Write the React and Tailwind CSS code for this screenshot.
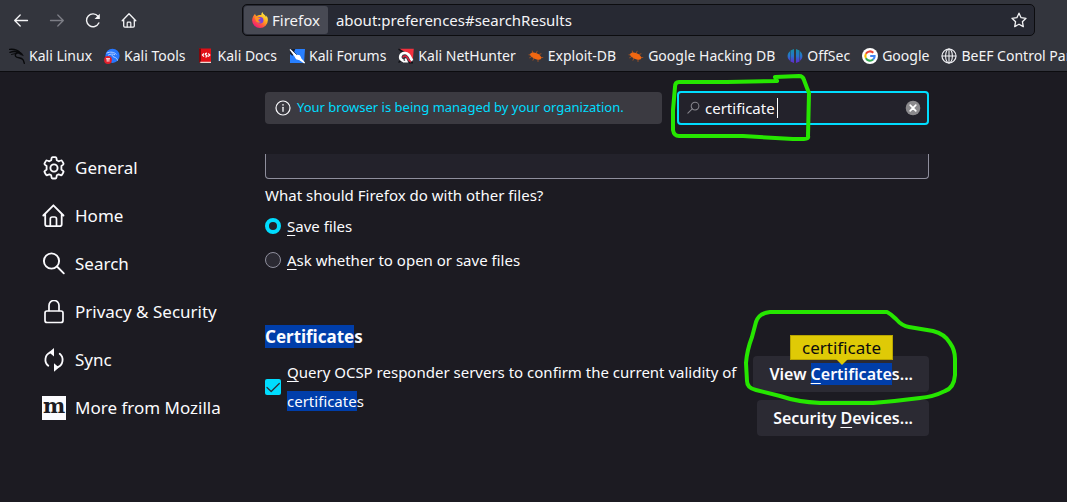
import React from "react";

function Glyph({ className = "size-4", box = 16, children }) {
  return (
    <svg
      className={`shrink-0 ${className}`}
      viewBox={`0 0 ${box} ${box}`}
      fill="none"
      stroke="currentColor"
      strokeLinecap="round"
      strokeLinejoin="round"
      aria-hidden="true"
    >
      {children}
    </svg>
  );
}

const BackIcon = () => (
  <Glyph><path d="M14.5 8.500H1.800M7.200 3 1.700 8.500l5.500 5.500" strokeWidth="1.3" /></Glyph>
);
const ForwardIcon = () => (
  <Glyph><path d="M1.500 8.500h12.700M8.800 3 14.300 8.500l-5.500 5.500" strokeWidth="1.3" /></Glyph>
);
const ReloadIcon = () => (
  <Glyph>
    <path d="M13.800 11a6.400 6.400 0 1 1-.8-6.700" strokeWidth="1.4" />
    <path d="M14.800 1.800v5.200H9.600z" fill="currentColor" stroke="none" />
  </Glyph>
);
const HomeSmallIcon = () => (
  <Glyph>
    <path d="M1.2 8.800 8 1.800l6.800 7M2.700 7.500v6.500c0 .7.4 1.100 1.100 1.100h8.400c.7 0 1.100-.4 1.100-1.100V7.500" strokeWidth="1.3" />
    <path d="M6.2 15v-4c0-.5.3-.8.8-.8h2c.5 0 .8.3.8.8v4" strokeWidth="1.2" />
  </Glyph>
);
const StarIcon = () => (
  <Glyph>
    <path d="m8 1.200 2.100 4.500 4.900.6-3.600 3.400.9 4.900L8 12.200l-4.300 2.400.9-4.900L1 6.300l4.900-.6z" strokeWidth="1.3" />
  </Glyph>
);

const FirefoxLogo = () => (
  <svg className="size-4 shrink-0" viewBox="0 0 16 16" aria-hidden="true">
    <defs>
      <linearGradient id="fx-body" x1="0.85" y1="0.1" x2="0.2" y2="0.95">
        <stop offset="0" stopColor="#fff04a" />
        <stop offset="0.35" stopColor="#ffae1c" />
        <stop offset="0.65" stopColor="#ff5a3c" />
        <stop offset="1" stopColor="#f0147e" />
      </linearGradient>
    </defs>
    <path d="M10.4.1c-1 1-1.200 2-1 2.800C7 2.800 5.300 3.300 4.600 4 3.700 3.700 3.100 2.700 3.100 1.800 1.700 3 .2 5.500.1 8.200A7.900 7.900 0 0 0 8 16a7.900 7.900 0 0 0 7.900-7.900c0-2-.8-3.700-1.800-4.500.2.700.2 1.200.1 1.700C13.200 2.700 10.700 2.400 10.400.1z" fill="url(#fx-body)" />
    <circle cx="8.100" cy="8.300" r="3.300" fill="#7a42d8" />
    <path d="M2.800 5.100c1.500-.6 3-.2 3.600.6 1 .1 2.100.1 2.100.5 0 .6-1.800 1-2 1.900-.2 1 1 2.100 2.500 1.500-1.100 1.800-4.300 1.500-5.100-.8-.4-1.400-1.100-2.400-1.100-3.700z" fill="#ff9222" />
  </svg>
);

const KaliLinuxIcon = () => (
  <Glyph className="size-4 text-[#08090b]">
    <path d="M.6 1.400c4-.4 8 .6 10.400 3.200M1 4.400c3-1.200 6-1 8 .2M10.400 4.800C7 4.700 5.600 6.600 6.700 8.300c1.300 1.900 5.500 1 7.200 3.300.9 1.200 1 2.400 1.400 3.700" strokeWidth="1.400" />
    <path d="m9.500 3.600 3 1.400 1.800 2.600-2.800-1L10 5.600z" fill="currentColor" strokeWidth=".6" />
    <path d="m2.500 6.500 4-1" strokeWidth=".9" />
  </Glyph>
);
const KaliToolsIcon = () => (
  <svg className="size-4 shrink-0" viewBox="0 0 16 16" aria-hidden="true">
    <circle cx="8.500" cy="7.800" r="7.100" fill="#2777ff" />
    <path d="M2.500 5.200c4-2 8-1 10 1.400M4 7.200c2.500-1.500 5-1.400 7-.4M8 7c.5 3 5 1.500 5.500 5.500" fill="none" stroke="#b8d0ff" strokeWidth="1" />
    <circle cx="4" cy="12" r="3.900" fill="#e21f2b" />
    <path d="M2 10.700h4M3.200 10.700v3M4.900 10.700v3" fill="none" stroke="#fff" strokeWidth=".9" />
  </svg>
);
const KaliDocsIcon = () => (
  <svg className="size-4 shrink-0" viewBox="0 0 16 16" aria-hidden="true">
    <path d="M1 .500h12V15H2.500L1 14z" fill="#e10f16" />
    <path d="M1 .500h2V14H1z" fill="#7d090d" />
    <path d="M2 13.700h11V15H2.500z" fill="#f1d9d3" />
    <path d="M6 5.500 4.400 7 6 8.600M10.200 5.500 11.800 7l-1.600 1.700M9 5.200c-2.600.2-1.700 1.800-.8 1.900 1.500.3 1.100 1.800-.7 2" fill="none" stroke="#fff" strokeWidth="1.200" />
  </svg>
);
const KaliForumsIcon = () => (
  <svg className="size-4 shrink-0" viewBox="0 0 16 16" aria-hidden="true">
    <path d="M1 1h15l-1 14H1z" fill="#277fff" />
    <path d="M.8 1h5.500L3.500 8 1 6z" fill="#172033" />
    <path d="M1 1.500 7 7l3.500.8 1.500 3 3.600 4.200-4.800-3.300-3.300-1-1.500-2.600z" fill="#fff" stroke="#fff" strokeWidth="1.200" />
    <path d="m3.500 2.500 4.200 4.200" stroke="#172033" strokeWidth=".7" />
  </svg>
);
const NetHunterIcon = () => (
  <svg className="size-4 shrink-0" viewBox="0 0 16 16" aria-hidden="true">
    <path d="M1.500.800H15.800L14.800 12 9 5z" fill="#f4303d" />
    <path d="M.5 1 4.500 3.800M.5 14.500l2.500-2M11 14.800h4" stroke="#101116" strokeWidth="1.500" />
    <path d="M5.500 13C.2 11 1.800 5.200 6.800 5c4-.2 5 3.700 7.400 7.800" fill="none" stroke="#fff" strokeWidth="2.700" />
    <path d="M5 13.600h3.800L7.300 10.500" fill="none" stroke="#fff" strokeWidth="1.800" />
    <path d="M4.800 9.500C5.500 7.500 8 7.500 9 9c1 1.700 2 4 4 5" fill="none" stroke="#e3203c" strokeWidth="1.500" />
  </svg>
);
const BugIcon = () => (
  <Glyph className="size-4 text-[#f26711]">
    <path d="M2.300 5.700C4 3.600 8.800 4.500 11.800 7.200c1.500 1.400 2.100 3.300.9 4.100-2.200 1.200-7.600-.6-9.800-3.100-.8-.9-1.100-1.700-.6-2.500z" fill="currentColor" stroke="none" />
    <path d="M5 5.500 4.300 3M8 5.200l1.200-2M10.500 6.700l2.500-.9M4 8.500l-2.300 1.200M6 9.700l-1 2.500M10 11v2.500M12.500 9.500h2.300M1 6.800h1.500" strokeWidth=".7" strokeOpacity=".8" />
  </Glyph>
);
const OffSecIcon = () => (
  <svg className="size-4 shrink-0" viewBox="0 0 16 16" aria-hidden="true">
    <defs>
      <linearGradient id="offsec" x1="0" y1="0" x2="0" y2="1">
        <stop offset="0" stopColor="#168fa3" />
        <stop offset="0.5" stopColor="#2675cb" />
        <stop offset="1" stopColor="#6423cf" />
      </linearGradient>
    </defs>
    <path d="M3 3.200v9.600C1.500 11.600.6 10 .6 8S1.500 4.400 3 3.200zM3.500 2.600 7 .900v14.200l-3.500-1.700zM9 .900l3.500 1.700v10.800L9 15.100zM13 3.200c1.500 1.200 2.400 2.800 2.400 4.800s-.9 3.600-2.400 4.800z" fill="url(#offsec)" />
  </svg>
);
const GoogleIcon = () => (
  <svg className="size-4 shrink-0" viewBox="0 0 16 16" aria-hidden="true">
    <circle cx="8" cy="8" r="8" fill="#fff" />
    <g fill="none" strokeWidth="2.100">
      <path d="M11.300 4.700A4.700 4.700 0 0 0 3.900 5.800" stroke="#ea4335" />
      <path d="M3.900 5.800a4.700 4.700 0 0 0 0 4.500" stroke="#fbbc05" />
      <path d="M3.900 10.300a4.700 4.700 0 0 0 7.200 1.200" stroke="#34a853" />
      <path d="M11.100 11.500C12.300 10.400 12.700 9.200 12.600 8H8.200" stroke="#4285f4" />
    </g>
  </svg>
);
const GlobeIcon = () => (
  <Glyph className="size-4 text-[#f0f0f4]">
    <circle cx="8" cy="8" r="7" strokeWidth="1.200" />
    <ellipse cx="8" cy="8" rx="3.400" ry="7" strokeWidth="1.100" />
    <path d="M1.200 8h13.600M8 1v14" strokeWidth="1.100" />
  </Glyph>
);

const bookmarks = [
  ["Kali Linux", KaliLinuxIcon],
  ["Kali Tools", KaliToolsIcon],
  ["Kali Docs", KaliDocsIcon],
  ["Kali Forums", KaliForumsIcon],
  ["Kali NetHunter", NetHunterIcon],
  ["Exploit-DB", BugIcon],
  ["Google Hacking DB", BugIcon],
  ["OffSec", OffSecIcon],
  ["Google", GoogleIcon],
  ["BeEF Control Panel", GlobeIcon],
];

const GearIcon = () => (
  <Glyph className="size-6" box={24}>
    <path d="M10.600 1.200h2.800c.5 0 .9.300 1 .8l.4 2.300 1.800 1 2.200-.8c.5-.2 1 0 1.200.4l1.400 2.400c.3.500.1 1-.200 1.300L19.400 10v3.500l1.800 1.500c.4.300.5.800.200 1.300L20 18.700c-.3.400-.8.600-1.200.4l-2.200-.8-1.800 1-.4 2.300c-.1.500-.5.900-1 .9h-2.800c-.5 0-.9-.4-1-.9l-.4-2.300-1.800-1-2.200.8c-.5.2-1 0-1.200-.4l-1.400-2.400c-.3-.5-.2-1 .2-1.300l1.800-1.500V10L2.800 8.600c-.4-.3-.5-.8-.2-1.300L4 4.900c.2-.4.700-.6 1.200-.4l2.200.8 1.800-1L9.600 2c.1-.5.500-.8 1-.8z" strokeWidth="1.800" />
    <circle cx="12" cy="12" r="3.600" strokeWidth="1.900" />
  </Glyph>
);
const HomeIcon = () => (
  <Glyph className="size-6" box={24}>
    <path d="M1.300 11.500 11.400 1.300l10.100 10.200M3.200 10v10.200c0 1.200.7 1.900 1.900 1.900h12.700c1.200 0 1.900-.7 1.900-1.900V10" strokeWidth="1.800" />
    <path d="M8.300 22v-7.100c0-1.200.8-1.900 1.900-1.900h2.400c1.100 0 1.900.7 1.900 1.900V22" strokeWidth="1.700" />
  </Glyph>
);
const SearchIcon = () => (
  <Glyph className="size-6" box={24}>
    <circle cx="9.500" cy="9" r="7.600" strokeWidth="1.900" />
    <path d="m15 14.500 6.800 6.800" strokeWidth="1.900" />
  </Glyph>
);
const LockIcon = () => (
  <Glyph className="size-6" box={24}>
    <rect x="3" y="11" width="18" height="11.500" rx="2" strokeWidth="1.700" />
    <path d="M7 10.500V5.500a5 5 0 0 1 10 0v5" strokeWidth="1.700" />
  </Glyph>
);
const SyncIcon = () => (
  <Glyph className="size-6" box={24}>
    <path d="M6.300 17.800A7.900 7.900 0 0 1 8.300 4.400M17.700 5.800a7.900 7.900 0 0 1-2 13.400" strokeWidth="1.800" />
    <path d="M12 0v8.500L7 4.300zM12 15.300v8.500l5-4.300z" fill="currentColor" stroke="none" />
  </Glyph>
);
const MozillaIcon = () => (
  <span className="flex size-6 shrink-0 justify-center bg-[#fbfbfe] font-['DejaVu_Serif',serif] text-[21px] leading-5 font-bold text-[#1c1b22]">
    m
  </span>
);

const categories = [
  ["General", GearIcon],
  ["Home", HomeIcon],
  ["Search", SearchIcon],
  ["Privacy & Security", LockIcon],
  ["Sync", SyncIcon],
  ["More from Mozilla", MozillaIcon],
];

const Key = ({ children }) => (
  <span className="underline decoration-1 underline-offset-3">{children}</span>
);
const Found = ({ children }) => (
  <mark className="bg-[#003eaa] text-[#fbfbfe]">{children}</mark>
);

function Toolbar() {
  return (
    <header className="overflow-hidden border-b border-[#0c0c0f] bg-[#33353d] text-[#f4f4f6]">
      <div className="flex h-10 items-center pr-8 pl-[13px]">
        <nav className="flex w-[229px] shrink-0 items-center gap-5">
          <button aria-label="Back"><BackIcon /></button>
          <button aria-label="Forward" className="text-[#7d7e86]" disabled><ForwardIcon /></button>
          <button aria-label="Reload"><ReloadIcon /></button>
          <button aria-label="Home page"><HomeSmallIcon /></button>
        </nav>
        <div className="flex h-8 min-w-0 flex-1 items-center rounded-[5px] border border-[#0c0c0f] bg-[#272933] pr-[7px] pl-px">
          <button className="flex h-7 shrink-0 items-center gap-1 rounded-[3px] bg-[#484a54] px-2 text-[15px]">
            <FirefoxLogo />
            Firefox
          </button>
          <input
            aria-label="Address"
            className="ml-2 min-w-0 flex-1 bg-transparent text-[15px] outline-none"
            defaultValue="about:preferences#searchResults"
          />
          <button aria-label="Bookmark this page"><StarIcon /></button>
        </div>
      </div>
      <nav className="flex h-[31px] items-center gap-3 pl-[9px] text-[14px] whitespace-nowrap">
        {bookmarks.map(([name, Icon]) => (
          <a key={name} href="#" className="flex shrink-0 items-center gap-1">
            <Icon />
            {name}
          </a>
        ))}
      </nav>
    </header>
  );
}

function Sidebar() {
  return (
    <nav className="w-[223px] shrink-0 pt-[72px] text-[17px]">
      {categories.map(([name, Icon]) => (
        <a key={name} href="#" className="flex h-12 items-center gap-[9px]">
          <Icon />
          {name}
        </a>
      ))}
    </nav>
  );
}

function SearchRow() {
  return (
    <div className="flex items-center gap-[15px]">
      <div className="flex h-8 flex-1 items-center gap-1.5 rounded-sm bg-[#3b3a41] px-2.5 text-[13px] text-[#00ddff]">
        <Glyph className="size-4 text-[#fbfbfe]">
          <circle cx="8" cy="8" r="7" strokeWidth="1.200" />
          <path d="M8 7.300v4" strokeWidth="1.300" />
          <path d="M8 4.700v.2" strokeWidth="1.500" />
        </Glyph>
        <a href="#">Your browser is being managed by your organization.</a>
      </div>
      <div className="relative flex h-[34px] w-[252px] items-center rounded-sm border-2 border-[#00ddff] bg-[#23222b] pr-1.5 pl-2">
        <Glyph className="size-3.5 text-[#85848c]">
          <circle cx="9.200" cy="5.800" r="4.400" strokeWidth="1.200" />
          <path d="m6 9-5 4.800" strokeWidth="1.200" />
        </Glyph>
        <input
          aria-label="Find in Settings"
          className="ml-1 min-w-0 flex-1 bg-transparent text-[15px] outline-none"
          defaultValue="certificate"
        />
        <span className="absolute top-[5px] left-[98px] h-5 w-px bg-white" />
        <button aria-label="Clear">
          <svg className="size-4" viewBox="0 0 16 16" aria-hidden="true">
            <circle cx="8" cy="8" r="7.300" fill="#8b8a8d" />
            <path d="m5.200 5.200 5.600 5.600m0-5.600-5.600 5.600" stroke="#fff" strokeWidth="1.700" strokeLinecap="round" />
          </svg>
        </button>
        <svg className="pointer-events-none absolute -top-5 -left-2 h-[70px] w-[145px]" viewBox="671 73 145 70" fill="none" aria-hidden="true">
          <path d="M775 77 777 81 727 82 679 82Q675 82 675 87L673 110V130Q674 136 679 136L743 136 793 139 804 139Q809 139 808 136L809 93 807 88 804 80Q803 76 799 76L775 77" stroke="#26e600" strokeWidth="4" strokeLinejoin="round" strokeLinecap="round" />
        </svg>
      </div>
    </div>
  );
}

function Radio({ id, checked, children }) {
  return (
    <div className="flex h-[34px] items-center gap-1.5">
      <input
        type="radio"
        name="other-files"
        id={id}
        defaultChecked={checked}
        className="size-4 appearance-none rounded-full border border-[#8f8f9d] bg-[#2b2a33] checked:border-4 checked:border-[#00ddff] checked:bg-[#23222b]"
      />
      <label htmlFor={id}>{children}</label>
    </div>
  );
}

function Certificates() {
  return (
    <section className="mt-12">
      <h2 className="text-[17px] leading-6 font-bold"><Found>Certificate</Found>s</h2>
      <div className="flex items-start pt-[7px]">
        <div className="flex min-w-0 flex-1 items-center gap-1.5 pt-0.5">
          <span className="relative flex size-4 shrink-0">
            <input
              type="checkbox"
              id="ocsp"
              defaultChecked
              className="size-4 appearance-none rounded-[2px] bg-[#00ddff]"
            />
            <Glyph className="pointer-events-none absolute size-4 text-[#2b2a33]">
              <path d="m2 8.500 4.200 4L14.300 4.500" strokeWidth="1.200" />
            </Glyph>
          </span>
          <label htmlFor="ocsp" className="-mr-2 leading-[29px]">
            <Key>Q</Key>uery OCSP responder servers to confirm the current validity of <Found>certificate</Found>s
          </label>
        </div>
        <div className="relative ml-2 flex shrink-0 flex-col items-end gap-2 text-base font-semibold">
          <button className="h-9 rounded-sm bg-[#2b2a33] px-4">
            View <Found><Key>C</Key>ertificate</Found>s...
          </button>
          <button className="h-9 rounded-sm bg-[#2b2a33] px-4">
            Security <Key>D</Key>evices...
          </button>
          <div className="absolute -top-[21px] right-9 flex h-[25px] w-[103px] items-center justify-center border border-[#b8a500] bg-[#dfca06] text-[17px] font-normal text-[#0c0c0d]">
            certificate
            <svg className="absolute top-full left-1/2 h-1.5 w-3 -translate-x-1/2" viewBox="0 0 12 6" aria-hidden="true">
              <path d="M0 0h12L6 6z" fill="#dfca06" />
            </svg>
          </div>
          <svg className="pointer-events-none absolute -top-[51px] -right-[31px] h-[105px] w-[220px]" viewBox="740 305 220 105" fill="none" aria-hidden="true">
            <path d="M770 312H862L887 312Q891 314 896 319 902 326 909 327L933 331Q945 334 950 343 955 350 955 359V375Q954 388 945 391 933 397 920 398 897 401 873 403H820Q798 402 780 396L756 390Q747 388 747 381L746 363Q747 350 752 337L756 322Q759 313 770 312Z" stroke="#26e600" strokeWidth="4" strokeLinejoin="round" />
          </svg>
        </div>
      </div>
    </section>
  );
}

export default function App() {
  return (
    <div className="flex min-h-screen flex-col overflow-hidden bg-[#1c1b22] font-['Noto_Sans',sans-serif] text-[15px] text-[#fbfbfe]">
      <Toolbar />
      <div className="flex flex-1 pl-[42px]">
        <Sidebar />
        <main className="mr-[138px] min-w-0 max-w-[664px] flex-1 pt-[19px]">
          <SearchRow />
          <div className="mt-[29px] h-[25px] rounded-b-sm border border-t-0 border-[#8f8f9d] bg-[#23222b]" />
          <p className="pt-1 pb-0.5 leading-6">What should Firefox do with other files?</p>
          <Radio id="save" checked><Key>S</Key>ave files</Radio>
          <Radio id="ask"><Key>A</Key>sk whether to open or save files</Radio>
          <Certificates />
        </main>
      </div>
    </div>
  );
}
